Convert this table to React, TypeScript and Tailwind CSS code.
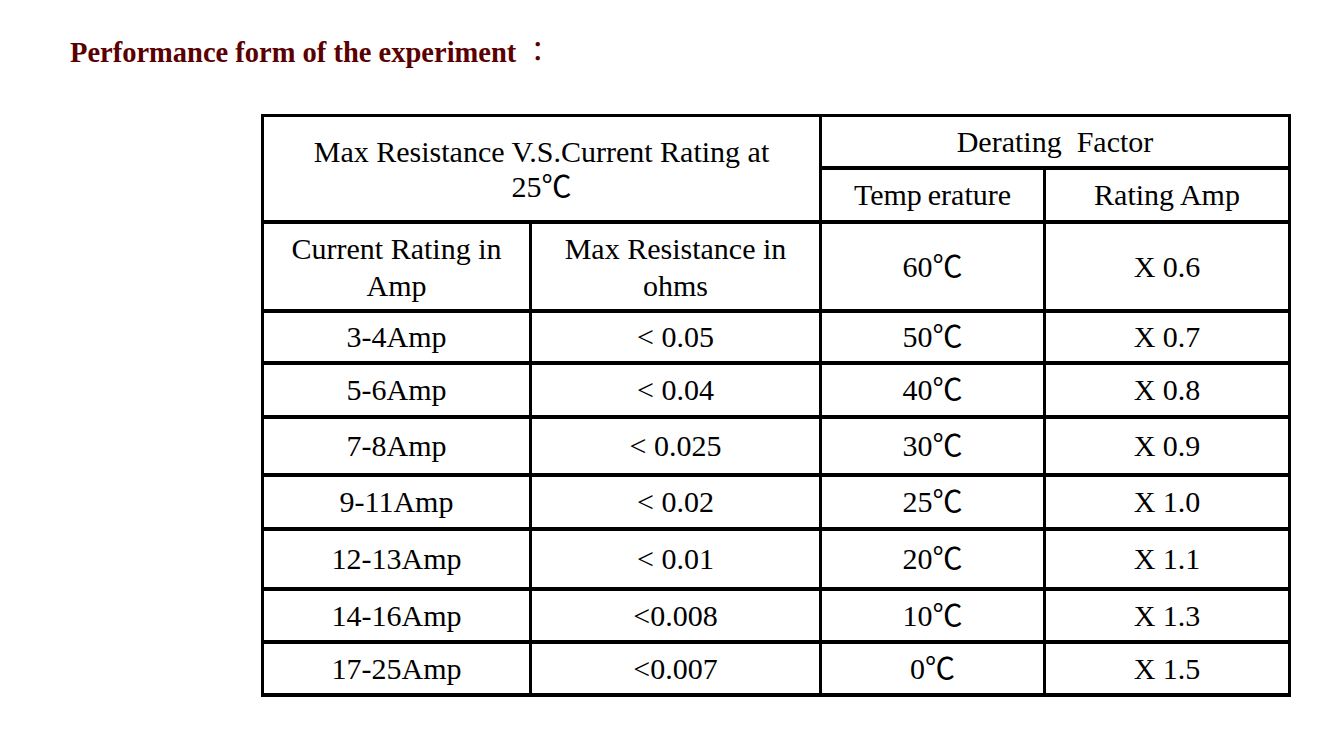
import React from "react";

const rows: [string, string, string, string][] = [
  ["3-4Amp", "< 0.05", "50℃", "X 0.7"],
  ["5-6Amp", "< 0.04", "40℃", "X 0.8"],
  ["7-8Amp", "< 0.025", "30℃", "X 0.9"],
  ["9-11Amp", "< 0.02", "25℃", "X 1.0"],
  ["12-13Amp", "< 0.01", "20℃", "X 1.1"],
  ["14-16Amp", "<0.008", "10℃", "X 1.3"],
  ["17-25Amp", "<0.007", "0℃", "X 1.5"],
];

function Cell({ className = "", children }: { className?: string; children: React.ReactNode }) {
  return (
    <div className={`bg-white flex items-center justify-center text-center text-black ${className}`}>
      <div>{children}</div>
    </div>
  );
}

export default function App() {
  return (
    <div className="min-h-[735px] bg-white pl-[70px] pt-[37px]">
      <h1
        className="h-[32px] text-[28.5px] leading-[32px] font-bold text-[#5a0000] whitespace-pre"
        style={{ fontFamily: '"Liberation Serif", serif' }}
      >
        {"Performance form of the experiment "}
        <span className="font-normal leading-[0px]" style={{ fontFamily: '"Noto Sans CJK TC", sans-serif' }}>
          ：
        </span>
      </h1>
      <div
        className="ml-[191px] mt-[45px] inline-grid bg-black pt-[3px] pl-[3px] pr-[3px] pb-[4px] gap-x-[3px] gap-y-[4px] grid-cols-[265px_287px_221px_242px] grid-rows-[49px_50px_85px_48px_50px_54px_50px_56px_49px_49px] text-[30px] leading-[34px]"
        style={{ fontFamily: '"Liberation Serif", "Noto Sans CJK SC", "DejaVu Serif", serif' }}
      >
        <Cell className="col-span-2 row-span-2 leading-[35px]">
          Max Resistance V.S.Current Rating at
          <br />
          25℃
        </Cell>
        <Cell className="col-span-2">{"Derating\u00a0 Factor"}</Cell>
        <Cell>{"Temp\u2009erature"}</Cell>
        <Cell>Rating Amp</Cell>
        <Cell className="leading-[37px]">
          Current Rating in
          <br />
          Amp
        </Cell>
        <Cell className="leading-[37px]">
          Max Resistance in
          <br />
          ohms
        </Cell>
        <Cell>60℃</Cell>
        <Cell>X 0.6</Cell>
        {rows.map((r, i) => (
          <React.Fragment key={i}>
            <Cell>{r[0]}</Cell>
            <Cell>{r[1]}</Cell>
            <Cell>{r[2]}</Cell>
            <Cell>{r[3]}</Cell>
          </React.Fragment>
        ))}
      </div>
    </div>
  );
}
